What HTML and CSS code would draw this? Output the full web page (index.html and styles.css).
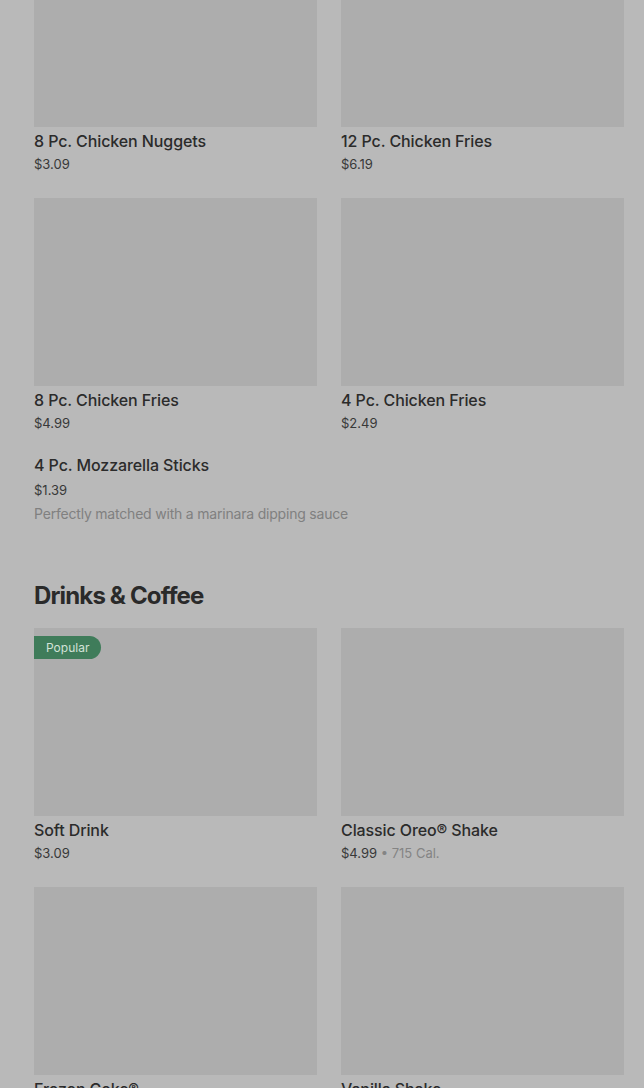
FILE: index.html
```html
<!DOCTYPE html>
<html>
<head>
    <meta charset="utf-8">
    <link rel="stylesheet" href="styles.css">
</head>
<body>
    <div class="menu">
        <div class="grid">
            <div class="item">
                <div class="photo"></div>
                <div class="name">8 Pc. Chicken Nuggets</div>
                <div class="price">$3.09</div>
            </div>
            <div class="item">
                <div class="photo"></div>
                <div class="name">12 Pc. Chicken Fries</div>
                <div class="price">$6.19</div>
            </div>
            <div class="item">
                <div class="photo"></div>
                <div class="name">8 Pc. Chicken Fries</div>
                <div class="price">$4.99</div>
            </div>
            <div class="item">
                <div class="photo"></div>
                <div class="name">4 Pc. Chicken Fries</div>
                <div class="price">$2.49</div>
            </div>
        </div>

        <div class="item wide">
            <div class="name">4 Pc. Mozzarella Sticks</div>
            <div class="price">$1.39</div>
            <div class="desc">Perfectly matched with a marinara dipping sauce</div>
        </div>

        <h2 class="section-title">Drinks &amp; Coffee</h2>

        <div class="grid">
            <div class="item">
                <div class="photo">
                    <span class="badge">Popular</span>
                </div>
                <div class="name">Soft Drink</div>
                <div class="price">$3.09</div>
            </div>
            <div class="item">
                <div class="photo"></div>
                <div class="name">Classic Oreo® Shake</div>
                <div class="price">$4.99 <span class="cal">• 715 Cal.</span></div>
            </div>
            <div class="item">
                <div class="photo"></div>
                <div class="name">Frozen Coke®</div>
                <div class="price">$3.09</div>
            </div>
            <div class="item">
                <div class="photo"></div>
                <div class="name">Vanilla Shake</div>
                <div class="price">$4.99</div>
            </div>
        </div>
    </div>
</body>
</html>
```

FILE: styles.css
```css
body {
    margin: 0;
    background: #b9b9b9;
    font-family: Inter, Roboto, sans-serif;
    color: #2b2b2b;
    overflow: hidden;
}

.menu {
    padding: 0 20px 0 34px;
    margin-top: -61px;
}

.grid {
    display: grid;
    grid-template-columns: 1fr 1fr;
    gap: 24px;
}

.photo {
    position: relative;
    height: 188px;
    background: #adadad;
}

.badge {
    position: absolute;
    top: 8px;
    left: 0;
    height: 23px;
    line-height: 23px;
    padding: 0 12px;
    background: #3f7c5a;
    color: #d3e2d8;
    font-size: 12px;
    border-radius: 0 12px 12px 0;
}

.name {
    margin-top: 4px;
    font-size: 16px;
    line-height: 20px;
    font-weight: 500;
    letter-spacing: -0.1px;
}

.price {
    margin-top: 3px;
    font-size: 13px;
    line-height: 20px;
    color: #383838;
}

.cal {
    color: #848484;
}

.wide {
    margin-top: 22px;
}

.wide .price {
    margin-top: 5px;
}

.desc {
    margin-top: 4px;
    font-size: 14px;
    line-height: 20px;
    letter-spacing: -0.2px;
    color: #808080;
}

.section-title {
    margin: 56px 0 16px;
    font-size: 24px;
    line-height: 32px;
    font-weight: 700;
    letter-spacing: -0.85px;
    color: #2a2a2a;
}
```
